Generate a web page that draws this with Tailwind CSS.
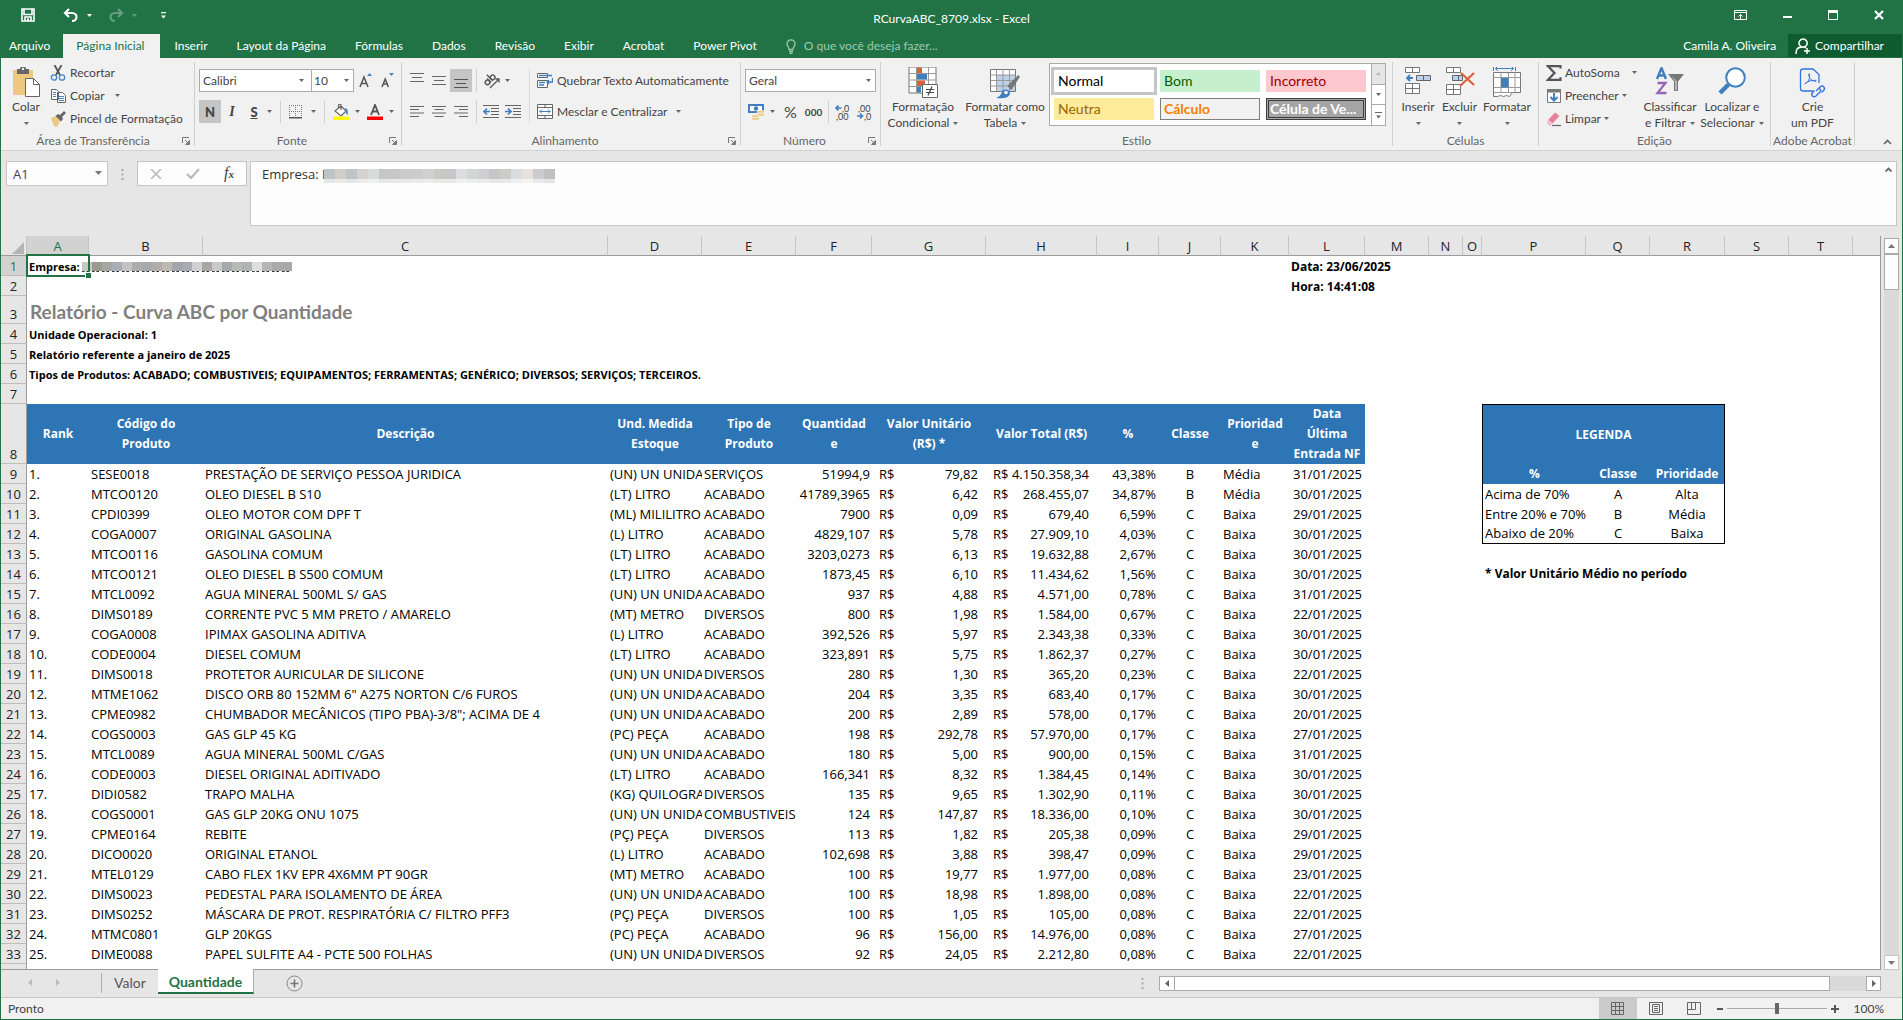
<!DOCTYPE html>
<html lang="pt-BR">
<head>
  <meta charset="UTF-8" />
  <meta name="viewport" content="width=device-width, initial-scale=1.0" />
  <title>RCurvaABC_8709.xlsx - Excel</title>
  <script src="https://cdn.jsdelivr.net/npm/@tailwindcss/browser@4"></script>
</head>
<body class="h-screen flex flex-col overflow-hidden bg-[#e6e6e6] border-x border-b border-[#217346] font-['Lato','Open_Sans',sans-serif] text-xs text-[#444]">

  <!-- Shared glyphs -->
  <svg class="hidden">
    <symbol id="caret" viewBox="0 0 5 3"><path d="M0 0h5L2.5 3z" fill="#666" /></symbol>
    <symbol id="launcher" viewBox="0 0 8 8"><path d="M.5 6V.5H7M3 3l3.5 3.5M7.5 3.5v4h-4z" fill="none" stroke="#777" /><path d="M7.5 4v3.5H4z" fill="#777" /></symbol>
  </svg>

  <!-- Title bar -->
  <header class="bg-[#217346] text-white shrink-0">
    <div class="h-[34px] flex items-center relative">
      <div class="flex items-center pl-5 pb-1">
        <button aria-label="Salvar"><svg class="w-[14px] h-[14px]" viewBox="0 0 14 14"><path d="M1 1h12v12H1zM3 1v5.500h8V1M4 13V9h6v4" fill="none" stroke="#fff" stroke-width="1.600" /><path d="M6 10.500h2V13H6z" fill="#fff" /></svg></button>
        <button aria-label="Desfazer" class="ml-7 flex items-center gap-2"><svg class="w-[16px] h-[14px]" viewBox="0 0 16 14"><path d="M6 1L2 5l4 4M2.500 5H9c6 0 6 8 0 8" fill="none" stroke="#fff" stroke-width="2.200" /></svg><svg class="w-[5px] h-[3px]" viewBox="0 0 5 3"><path d="M0 0h5L2.500 3z" fill="#fff" /></svg></button>
        <button aria-label="Refazer" class="ml-4 flex items-center gap-2 opacity-30"><svg class="w-[16px] h-[14px]" viewBox="0 0 16 14"><path d="M10 1l4 4-4 4M13.500 5H7c-6 0-6 8 0 8" fill="none" stroke="#fff" stroke-width="2.200" /></svg><svg class="w-[5px] h-[3px]" viewBox="0 0 5 3"><path d="M0 0h5L2.500 3z" fill="#fff" /></svg></button>
        <button aria-label="Personalizar" class="ml-6"><svg class="w-[5px] h-[7px]" viewBox="0 0 5 7"><path d="M0 0h5v1.200H0zM0 3.500h5L2.500 6.500z" fill="#fff" /></svg></button>
      </div>
      <h1 class="absolute inset-x-0 top-[11px] text-center leading-4">RCurvaABC_8709.xlsx - Excel</h1>
      <div class="ml-auto flex items-center gap-[36px] pr-[18px] pb-1">
        <button aria-label="Opções da faixa"><svg class="w-[13px] h-[10px]" viewBox="0 0 13 10"><path d="M.5.5h12v9H.5zM.5 2.500h12M6.500 9V4.500M4.500 6.500l2-2 2 2" fill="none" stroke="#fff" /></svg></button>
        <button aria-label="Minimizar"><svg class="w-[9px] h-[10px]" viewBox="0 0 9 10"><path d="M0 6h9v2H0z" fill="#fff" /></svg></button>
        <button aria-label="Restaurar"><svg class="w-[10px] h-[10px]" viewBox="0 0 10 10"><path d="M.5.5h9v9h-9z" fill="none" stroke="#fff" /><path d="M0 0h10v3H0z" fill="#fff" /></svg></button>
        <button aria-label="Fechar"><svg class="w-[10px] h-[10px]" viewBox="0 0 10 10"><path d="M1 1l8 8M9 1L1 9" stroke="#fff" stroke-width="2.200" /></svg></button>
      </div>
    </div>

    <!-- Ribbon tabs -->
    <nav class="h-6 flex items-stretch leading-6">
      <a href="#" class="pl-2 pr-[13px]">Arquivo</a>
      <a href="#" class="pl-[13px] pr-4 bg-[#f1f1f1] text-[#217346]">Página Inicial</a>
      <a href="#" class="pl-[14px] pr-[15px]">Inserir</a>
      <a href="#" class="pl-[14px] pr-[15px]">Layout da Página</a>
      <a href="#" class="pl-[14px] pr-[15px]">Fórmulas</a>
      <a href="#" class="pl-[14px] pr-[15px]">Dados</a>
      <a href="#" class="pl-[14px] pr-[15px]">Revisão</a>
      <a href="#" class="pl-[14px] pr-[15px]">Exibir</a>
      <a href="#" class="pl-[14px] pr-[15px]">Acrobat</a>
      <a href="#" class="pl-[14px] pr-[15px]">Power Pivot</a>
      <label class="flex items-center gap-2 pl-[14px] text-[#a0c9b0]">
        <svg class="w-[10px] h-[15px]" viewBox="0 0 10 15"><path d="M3 10.500C3 8 1 7.500 1 4.800a4 4 0 0 1 8 0C9 7.500 7 8 7 10.500zM3 12.500h4M3.500 14.300h3" fill="none" stroke="#a0c9b0" stroke-width="1.300" /></svg>
        <input type="text" placeholder="O que você deseja fazer..." class="w-44 placeholder:text-[#a0c9b0] placeholder:opacity-100 outline-none" />
      </label>
      <a href="#" class="ml-auto px-3">Camila A. Oliveira</a>
      <button class="h-[23px] bg-[#0f5b2f] flex items-center gap-1 pl-[7px] pr-[18px] leading-[23px]">
        <svg class="w-[16px] h-[16px]" viewBox="0 0 16 16"><path d="M8 9C1 9 1.200 12.500 1 16M8 9.200A4.100 4.100 0 1 1 8.200 9.200M8 9c2 0 2.500.500 3 1M12 10v6M9 13h6" fill="none" stroke="#fff" stroke-width="1.500" /></svg>
        Compartilhar
      </button>
    </nav>
  </header>

  <!-- Ribbon -->
  <div class="h-[93px] shrink-0 flex bg-[#f1f1f1] border-b border-[#d2d2d2] whitespace-nowrap leading-4">

    <section class="w-[194px] my-1 border-r border-[#d0d0d0] flex flex-col">
      <div class="flex-1 flex pl-[9px]">
        <button class="w-[32px] h-[70px] flex flex-col items-center pt-[5px]">
          <svg class="w-[30px] h-[32px] shrink-0" viewBox="0 1 30 32"><path d="M2 4h20v25H2z" fill="#edc87e" /><path d="M6 3h3c0-4 6-4 6 0h3v5H6z" fill="#666" /><circle cx="12" cy="3" r="1.200" fill="#f1f1f1" /><path d="M14.500 12.500h8l6 6v12h-14z" fill="#fff" stroke="#666" /><path d="M22.500 12.500v6h6" fill="none" stroke="#666" /></svg>
          <span>Colar</span>
          <svg class="w-[5px] h-[3px] mt-[7px] shrink-0"><use href="#caret" /></svg>
        </button>
        <div class="flex flex-col pl-2 -mt-px">
          <button class="h-[23px] flex items-center gap-1"><svg class="w-4 h-4" viewBox="0 0 16 16"><path d="M4.500 0l5.500 10M11.500 0L6 10" stroke="#555" stroke-width="1.800" fill="none" /><circle cx="4" cy="12.500" r="2.700" fill="none" stroke="#4a86c0" stroke-width="1.300" /><circle cx="12" cy="12.500" r="2.700" fill="none" stroke="#4a86c0" stroke-width="1.300" /></svg>Recortar</button>
          <button class="h-[23px] flex items-center gap-1"><svg class="w-4 h-4" viewBox="0 0 16 16"><path d="M1.500 1.500h5l2 2v8h-7zM7.500 4.500h5l3 3v7h-8z" fill="#fff" stroke="#666" /><path d="M3 4.500h3M3 6.500h3M3 8.500h3M9 8.500h5M9 10.500h5M9 12.500h5" stroke="#4a86c0" /></svg>Copiar<svg class="w-[5px] h-[3px] ml-[6px]"><use href="#caret" /></svg></button>
          <button class="h-[23px] flex items-center gap-1"><svg class="w-4 h-4" viewBox="0 0 16 16"><path d="M1 7l5-2 4 5-3 6-3-1z" fill="#edc87e" /><path d="M5.500 5L8 3l2 1 4-4 2 2-4 4 1 2-2 2.500z" fill="#666" /></svg>Pincel de Formatação</button>
        </div>
      </div>
      <div class="flex items-center pr-1 leading-[10px] text-[#666]"><span class="flex-1 text-center pl-[3px]">Área de Transferência</span><button aria-label="Mais opções da área de transferência"><svg class="w-2 h-2"><use href="#launcher" /></svg></button></div>
    </section>

    <section class="w-[207px] my-1 border-r border-[#d0d0d0] flex flex-col">
      <div class="flex-1 flex flex-col gap-2 pt-[7px] pl-1">
        <div class="h-[23px] flex items-center">
          <div class="relative">
            <select aria-label="Fonte" class="appearance-none w-[113px] h-[23px] pl-[3px] bg-white border border-[#ababab]"><option>Calibri</option></select>
            <svg class="absolute right-2 top-[10px] w-[5px] h-[3px]"><use href="#caret" /></svg>
          </div>
          <div class="relative -ml-px">
            <select aria-label="Tamanho da fonte" class="appearance-none w-[43px] h-[23px] pl-[2px] bg-white border border-[#ababab]"><option>10</option></select>
            <svg class="absolute right-[5px] top-[10px] w-[5px] h-[3px]"><use href="#caret" /></svg>
          </div>
          <button aria-label="Aumentar fonte" class="ml-[5px]"><svg class="w-[14px] h-[15px]" viewBox="0 0 14 15"><path d="M1 14L5 4l4 10M2.500 10.500h5" fill="none" stroke="#555" stroke-width="1.500" /><path d="M8 3h5l-2.500-3z" fill="#4a86c0" /></svg></button>
          <button aria-label="Diminuir fonte" class="ml-2"><svg class="w-[14px] h-[15px]" viewBox="0 0 14 15"><path d="M1 14l3.200-8 3.200 8M2.200 11h4" fill="none" stroke="#555" stroke-width="1.500" /><path d="M8 0h5l-2.500 3z" fill="#4a86c0" /></svg></button>
        </div>
        <div class="h-[23px] flex items-center">
          <button class="w-[22px] h-[23px] bg-[#c5c5c5] font-black text-[13px]">N</button>
          <button class="w-[22px] italic font-bold font-['Liberation_Serif',serif] text-sm">I</button>
          <button class="w-[22px] underline font-black text-[13px]">S</button>
          <svg class="w-[5px] h-[3px] ml-[2px]"><use href="#caret" /></svg>
          <span class="w-px h-[22px] bg-[#d0d0d0] mx-2"></span>
          <button class="flex items-center gap-2" aria-label="Bordas"><svg class="w-[14px] h-[14px]" viewBox="0 0 14 14"><path d="M.5 0v12M6.500 0v12M12.500 0v12M0 .5h13M0 6.500h13" fill="none" stroke="#777" stroke-dasharray="1 1" /><path d="M0 12h13v1.500H0z" fill="#555" /></svg><svg class="w-[5px] h-[3px]"><use href="#caret" /></svg></button>
          <span class="w-px h-[22px] bg-[#d0d0d0] mx-2"></span>
          <button class="flex items-center gap-[6px]" aria-label="Cor de preenchimento"><svg class="w-4 h-4" viewBox="0 0 16 16"><path d="M2 7l6-5 5 5-5 5zM5.500 5V1.500C5.500 0 8 0 8 1.500V6" fill="#fff" stroke="#666" stroke-width="1.200" /><path d="M12 4c3 1 3.500 4 2.500 7-2-1-1.500-3-2.500-4z" fill="#4a86c0" /><path d="M0 12.500h16V16H0z" fill="#ff0" /></svg><svg class="w-[5px] h-[3px]"><use href="#caret" /></svg></button>
          <button class="ml-[7px] flex items-center gap-[6px]" aria-label="Cor da fonte"><svg class="w-4 h-4" viewBox="0 0 16 16"><path d="M4 11L8 1l4 10M5.500 7.500h5" fill="none" stroke="#555" stroke-width="1.800" /><path d="M0 12.500h16V16H0z" fill="red" /></svg><svg class="w-[5px] h-[3px]"><use href="#caret" /></svg></button>
        </div>
      </div>
      <div class="flex items-center pr-1 leading-[10px] text-[#666]"><span class="flex-1 text-center">Fonte</span><button aria-label="Mais opções de fonte"><svg class="w-2 h-2"><use href="#launcher" /></svg></button></div>
    </section>

    <section class="w-[339px] my-1 border-r border-[#d0d0d0] flex flex-col">
      <div class="flex-1 flex pt-[7px] pl-1">
        <div class="w-[70px] flex flex-col gap-2">
          <div class="flex">
            <button aria-label="Alinhar em cima" class="w-[22px] h-[23px] flex justify-center items-center"><svg class="w-[14px] h-[15px]" viewBox="0 0 14 15"><path d="M0 .5h14M2 4.500h10M0 8.500h14" stroke="#666" /></svg></button>
            <button aria-label="Alinhar no meio" class="w-[22px] h-[23px] flex justify-center items-center"><svg class="w-[14px] h-[15px]" viewBox="0 0 14 15"><path d="M0 3.500h14M2 7.500h10M0 11.500h14" stroke="#666" /></svg></button>
            <button aria-label="Alinhar embaixo" class="w-[22px] h-[23px] flex justify-center items-center bg-[#c5c5c5]"><svg class="w-[14px] h-[15px]" viewBox="0 0 14 15"><path d="M0 6.500h14M2 10.500h10M0 14.500h14" stroke="#555" /></svg></button>
          </div>
          <div class="flex">
            <button aria-label="Alinhar à esquerda" class="w-[22px] h-[23px] flex justify-center items-center"><svg class="w-[14px] h-[11px]" viewBox="0 0 14 11"><path d="M0 .5h14M0 3.500h9M0 7h14M0 10.500h9" stroke="#666" /></svg></button>
            <button aria-label="Centralizar" class="w-[22px] h-[23px] flex justify-center items-center"><svg class="w-[14px] h-[11px]" viewBox="0 0 14 11"><path d="M0 .5h14M2.500 3.500h9M0 7h14M2.500 10.500h9" stroke="#666" /></svg></button>
            <button aria-label="Alinhar à direita" class="w-[22px] h-[23px] flex justify-center items-center"><svg class="w-[14px] h-[11px]" viewBox="0 0 14 11"><path d="M0 .5h14M5 3.500h9M0 7h14M5 10.500h9" stroke="#666" /></svg></button>
          </div>
        </div>
        <div class="w-[54px] h-[54px] flex flex-col gap-2 border-r border-[#d8d8d8]">
          <button aria-label="Orientação" class="h-[23px] pl-[7px] flex items-center gap-1 border-l border-[#d0d0d0]">
            <svg class="w-[17px] h-[15px] overflow-visible" viewBox="0 0 17 15"><g transform="rotate(-45 6 7)" fill="none" stroke="#555" stroke-width="1.400"><circle cx="2.500" cy="7" r="2.300" /><path d="M5 4v5.500M7.500 1v8.500" /><circle cx="9.800" cy="7" r="2.300" /></g><path d="M6 15L15 6M11.500 6H15v3.500" fill="none" stroke="#555" stroke-width="1.300" /></svg>
            <svg class="w-[5px] h-[3px]"><use href="#caret" /></svg>
          </button>
          <div class="h-[23px] pl-[6px] flex items-center gap-[6px] border-l border-[#d0d0d0]">
            <button aria-label="Diminuir recuo"><svg class="w-4 h-[13px] block" viewBox="0 0 16 13"><path d="M0 .5h16M8 3.500h8M8 6.500h8M8 9.500h8M0 12.500h16" stroke="#666" /><path d="M7 6.500H1M4 3.500l-3 3 3 3" fill="none" stroke="#3f7fbf" stroke-width="1.700" /></svg></button>
            <button aria-label="Aumentar recuo"><svg class="w-4 h-[13px] block" viewBox="0 0 16 13"><path d="M0 .5h16M8 3.500h8M8 6.500h8M8 9.500h8M0 12.500h16" stroke="#666" /><path d="M0 6.500h6M3 3.500l3 3-3 3" fill="none" stroke="#3f7fbf" stroke-width="1.700" /></svg></button>
          </div>
        </div>
        <div class="flex flex-col gap-2 pl-[7px]">
          <button class="h-[23px] flex items-center gap-1"><svg class="w-4 h-4" viewBox="0 0 16 16"><path d="M.5.5h10v4H.5zM.5 7.500h10v7H.5z" fill="#fff" stroke="#666" /><path d="M2 2.500h13M2 9.500h6M2 12h5M15.500 5v4h-5M12 7l-2 2 2 2" fill="none" stroke="#3f7fbf" stroke-width="1.300" /></svg>Quebrar Texto Automaticamente</button>
          <button class="h-[23px] flex items-center gap-1"><svg class="w-4 h-4" viewBox="0 0 16 16"><path d="M.5.5h15v14H.5zM.5 3.500h15M.5 11.500h15M8 .5v3M8 11.500v3" fill="#fff" stroke="#666" /><path d="M2.500 7.500h11M5 5.500l-2 2 2 2M11 5.500l2 2-2 2" fill="none" stroke="#3f7fbf" /></svg>Mesclar e Centralizar<svg class="w-[5px] h-[3px] ml-[5px]"><use href="#caret" /></svg></button>
        </div>
      </div>
      <div class="flex items-center pr-1 leading-[10px] text-[#666]"><span class="flex-1 text-center">Alinhamento</span><button aria-label="Mais opções de alinhamento"><svg class="w-2 h-2"><use href="#launcher" /></svg></button></div>
    </section>

    <section class="w-[140px] my-1 border-r border-[#d0d0d0] flex flex-col">
      <div class="flex-1 flex flex-col gap-2 pt-[7px] pl-1">
        <div class="relative w-[131px]">
          <select aria-label="Formato de número" class="block appearance-none w-full h-[23px] pl-[3px] bg-white border border-[#ababab]"><option>Geral</option></select>
          <svg class="absolute right-[5px] top-[10px] w-[5px] h-[3px]"><use href="#caret" /></svg>
        </div>
        <div class="h-[23px] flex items-center pl-[3px]">
          <button aria-label="Formato de contabilização" class="flex items-center gap-[6px]"><svg class="w-4 h-4" viewBox="0 0 16 16"><path d="M0 0h16v9H0z" fill="#3f7fbf" /><path d="M2 2h12v5H2z" fill="#fff" /><circle cx="8" cy="4.500" r="2.200" fill="#3f7fbf" /><path d="M9 6.500h7v2.500H9zM9 9.500h7V12H9zM4 11h7v2.300H4zM4 13.700h7V16H4z" fill="#edc87e" stroke="#f1f1f1" stroke-width=".5" /></svg><svg class="w-[5px] h-[3px]"><use href="#caret" /></svg></button>
          <button class="ml-[9px] text-base">%</button>
          <button class="ml-2 text-[10px] font-bold">000</button>
          <span class="w-px h-[22px] bg-[#d0d0d0] mx-[6px]"></span>
          <button aria-label="Aumentar casas decimais"><svg class="w-4 h-4 overflow-visible" viewBox="0 0 16 16"><path d="M6.500 4H1M3.500 1.500L1 4l2.500 2.500" fill="none" stroke="#3f7fbf" stroke-width="1.700" /><text x="7" y="8" font-size="9" fill="#444">,0</text><text x="1" y="16" font-size="9" fill="#444">,00</text></svg></button>
          <button aria-label="Diminuir casas decimais" class="ml-[6px]"><svg class="w-4 h-4 overflow-visible" viewBox="0 0 16 16"><path d="M0 12h5.500M3 9.500L5.500 12 3 14.500" fill="none" stroke="#3f7fbf" stroke-width="1.700" /><text x="1" y="8" font-size="9" fill="#444">,00</text><text x="7" y="16" font-size="9" fill="#444">,0</text></svg></button>
        </div>
      </div>
      <div class="flex items-center pr-1 leading-[10px] text-[#666]"><span class="flex-1 text-center">Número</span><button aria-label="Mais opções de número"><svg class="w-2 h-2"><use href="#launcher" /></svg></button></div>
    </section>

    <section class="w-[512px] my-1 border-r border-[#d0d0d0] flex flex-col">
      <div class="flex-1 flex pl-1">
        <button class="w-[76px] flex flex-col items-center pt-[5px]">
          <svg class="w-[30px] h-[32px] shrink-0" viewBox="0 1 30 32"><path d="M1 1h27v26H1z" fill="#fff" stroke="#777" /><path d="M1 7.500h27M1 14h27M1 20.500h27M8.500 1v26M20.500 1v26" stroke="#999" /><path d="M9 1.500h5v5.500H9zM9 14.500h8v5.500H9z" fill="#d9603b" /><path d="M9 8h10v5.500H9zM9 21h4v5.500H9z" fill="#3f7fbf" /><path d="M14.500 18.500h15v13h-15z" fill="#fff" stroke="#666" /><path d="M18 23.500h8M18 26.500h8M24 20.500l-4 9" stroke="#444" stroke-width="1.200" /></svg>
          <span>Formatação</span>
          <span class="flex items-center gap-1">Condicional<svg class="w-[5px] h-[3px]"><use href="#caret" /></svg></span>
        </button>
        <button class="w-[88px] flex flex-col items-center pt-[5px]">
          <svg class="w-[30px] h-[32px] shrink-0" viewBox="0 1 30 32"><path d="M.5 3.500h25v22H.5z" fill="#fff" stroke="#777" /><path d="M7 9h18v16H7z" fill="#bcd0ea" /><path d="M.5 9h25M.5 14.500h25M.5 20h25M6.500 3.500v22M13 3.500v22M19.500 3.500v22" stroke="#999" /><path d="M29 10l-8 12-2-2z" stroke="#777" stroke-width="2.500" fill="#777" /><path d="M6 32c3-1 5-3 6-6 1-4 8-3 8 1 0 5-8 6-14 5z" fill="#3f7fbf" /><circle cx="16" cy="26.500" r="1.800" fill="#fff" /></svg>
          <span>Formatar como</span>
          <span class="flex items-center gap-1">Tabela<svg class="w-[5px] h-[3px]"><use href="#caret" /></svg></span>
        </button>
        <div class="mt-px h-[63px] flex border border-[#ababab] bg-white">
          <div class="grid grid-cols-3 content-center gap-[6px] pl-1 pr-[5px] text-sm leading-5 text-left">
            <button class="w-[100px] h-[22px] pl-1 text-left text-black outline-3 outline-[#c5c5c5]">Normal</button>
            <button class="w-[100px] h-[22px] pl-1 text-left bg-[#c6efce] text-[#006100]">Bom</button>
            <button class="w-[100px] h-[22px] pl-1 text-left bg-[#ffc7ce] text-[#9c0006]">Incorreto</button>
            <button class="w-[100px] h-[22px] pl-1 text-left bg-[#ffeb9c] text-[#9c6500]">Neutra</button>
            <button class="w-[100px] h-[22px] pl-[3px] text-left bg-[#f2f2f2] border border-[#7f7f7f] text-[#fa7d00] font-bold">Cálculo</button>
            <button class="w-[100px] h-[22px] pl-px text-left bg-[#a5a5a5] border-3 border-double border-[#3f3f3f] text-white font-bold leading-4">Célula de Ve...</button>
          </div>
          <div class="w-[14px] flex flex-col border-l border-[#ababab] divide-y divide-[#ababab]">
            <button aria-label="Estilos anteriores" class="flex-1 flex items-center justify-center bg-[#e6e6e6]"><svg class="w-[5px] h-[3px]" viewBox="0 0 5 3"><path d="M0 3h5L2.500 0z" fill="#b5b5b5" /></svg></button>
            <button aria-label="Próximos estilos" class="flex-1 flex items-center justify-center"><svg class="w-[5px] h-[3px]"><use href="#caret" /></svg></button>
            <button aria-label="Todos os estilos" class="flex-1 flex items-center justify-center"><svg class="w-[7px] h-[7px]" viewBox="0 0 7 7"><path d="M0 0h7v1H0zM1 3.500h5L3.500 6.500z" fill="#666" /></svg></button>
          </div>
        </div>
      </div>
      <div class="text-center leading-[10px] text-[#666]">Estilo</div>
    </section>

    <section class="w-[146px] my-1 border-r border-[#d0d0d0] flex flex-col">
      <div class="flex-1 flex pl-1">
        <button class="w-[42px] h-[70px] flex flex-col items-center pt-[5px]">
          <svg class="w-[28px] h-[32px] shrink-0" viewBox="0 1 28 32"><path d="M1.500 1.500h14v5h-14zM8.500 1.500v5M1.500 17.500h14v10h-14zM8.500 17.500v10M1.500 22.500h14" fill="#fff" stroke="#777" /><path d="M12.500 9.500h14v5h-14zM19.500 9.500v5" fill="#bcd0ea" stroke="#666" /><path d="M9 12H3M6 9l-3 3 3 3" fill="none" stroke="#3f7fbf" stroke-width="1.800" /></svg>
          <span>Inserir</span><svg class="w-[5px] h-[3px] mt-[7px] shrink-0"><use href="#caret" /></svg>
        </button>
        <button class="w-[41px] h-[70px] flex flex-col items-center pt-[5px]">
          <svg class="w-[30px] h-[32px] shrink-0" viewBox="0 1 30 32"><path d="M1.500 1.500h14v5h-14zM8.500 1.500v5M1.500 18.500h14v10h-14zM8.500 18.500v10M1.500 23.500h14" fill="#fff" stroke="#777" /><path d="M7.500 9.500h10v5h-10zM13.500 9.500v5" fill="#bcd0ea" stroke="#666" /><path d="M16 7l13 12M29 7L15 20" fill="none" stroke="#d9603b" stroke-width="2.200" /></svg>
          <span>Excluir</span><svg class="w-[5px] h-[3px] mt-[7px] shrink-0"><use href="#caret" /></svg>
        </button>
        <button class="w-[54px] h-[70px] flex flex-col items-center pt-[5px]">
          <svg class="w-[30px] h-[32px] shrink-0" viewBox="0 1 30 32"><path d="M1.500 1v4M23.500 1v4M3 2.500h19M6 0L3.500 2.500 6 5M19 0l2.500 2.500L19 5" fill="none" stroke="#3f7fbf" /><path d="M1.500 6.500h27v20h-8l-3 4-3-1-3 1-3-1-3 1h-4z" fill="#fff" stroke="#777" /><path d="M1.500 11.500h27M1.500 21.500h27M1.500 26.500h20M9 6.500v20M16.500 6.500v20M23 6.500v20" stroke="#999" /><path d="M9 12h7.500v9.500H9z" fill="#3f7fbf" /></svg>
          <span>Formatar</span><svg class="w-[5px] h-[3px] mt-[7px] shrink-0"><use href="#caret" /></svg>
        </button>
      </div>
      <div class="text-center leading-[10px] text-[#666]">Células</div>
    </section>

    <section class="w-[232px] my-1 border-r border-[#d0d0d0] flex flex-col">
      <div class="flex-1 flex pl-[7px]">
        <div class="w-[94px] flex flex-col -mt-px">
          <button class="h-[23px] flex items-center gap-[3px]"><svg class="w-4 h-4" viewBox="0 0 16 16"><path d="M14.500 3.500V1.200H2L8.500 8 2 14.800h12.500v-2.500" fill="none" stroke="#555" stroke-width="2.200" /></svg>AutoSoma<svg class="w-[5px] h-[3px] ml-[9px]"><use href="#caret" /></svg></button>
          <button class="h-[23px] flex items-center gap-[3px]"><svg class="w-4 h-4" viewBox="0 0 16 16"><path d="M1.500 1.500h13v13h-13z" fill="#fff" stroke="#777" /><path d="M1 1h14v3.500H1z" fill="#777" /><path d="M8 5v7M4.500 9L8 12.500 11.500 9" fill="none" stroke="#3f7fbf" stroke-width="2" /></svg>Preencher<svg class="w-[5px] h-[3px]"><use href="#caret" /></svg></button>
          <button class="h-[23px] flex items-center gap-[3px]"><svg class="w-4 h-4" viewBox="0 0 16 16"><path d="M2 9l7-7.500 4.500 3.500-7 7.500z" fill="#e8819a" /><path d="M1.500 9.500l4.500 3.500-1 1.500H3L1 12z" fill="#f2b8c6" /><path d="M6 14.500h9" stroke="#666" stroke-width="1.200" /></svg>Limpar<svg class="w-[5px] h-[3px]"><use href="#caret" /></svg></button>
        </div>
        <button class="w-[60px] flex flex-col items-center pt-[5px]">
          <svg class="w-[30px] h-[32px] shrink-0" viewBox="0 1 30 32"><path d="M2 13L6.500 2 11 13M3.500 9.500h6" fill="none" stroke="#3f7fbf" stroke-width="2.400" /><path d="M2.500 17h8L2.500 27h9" fill="none" stroke="#9466b8" stroke-width="2.300" /><path d="M13 8h16l-6 7.500V25h-4v-9.500z" fill="#777" /><path d="M20.500 15.500v9h1v-9l-5-6" fill="#f1f1f1" /></svg>
          <span>Classificar</span>
          <span class="flex items-center gap-1">e Filtrar<svg class="w-[5px] h-[3px]"><use href="#caret" /></svg></span>
        </button>
        <button class="w-[64px] flex flex-col items-center pt-[5px]">
          <svg class="w-[30px] h-[32px] shrink-0" viewBox="0 1 30 32"><circle cx="18.500" cy="11.500" r="9.300" fill="#fff" stroke="#3f7fbf" stroke-width="2" /><path d="M11.500 18.500L3 27" stroke="#3f7fbf" stroke-width="4.500" /></svg>
          <span>Localizar e</span>
          <span class="flex items-center gap-1">Selecionar<svg class="w-[5px] h-[3px]"><use href="#caret" /></svg></span>
        </button>
      </div>
      <div class="text-center leading-[10px] text-[#666]">Edição</div>
    </section>

    <section class="w-[84px] my-1 border-r border-[#d0d0d0] flex flex-col">
      <button class="flex-1 flex flex-col items-center pt-[5px]">
        <svg class="w-[30px] h-[32px] shrink-0" viewBox="0 1 30 32"><path d="M15 25H5c-2 0-2.500-1-2.500-2.500v-17C2.500 4 3 3 5 3h10l6 5.500V17" fill="none" stroke="#3573e0" stroke-width="1.300" /><path d="M6.500 18c4-1.500 5.500-6 5.200-9.500 0-1.500-1.200-1-1 .5.500 3.500 3 6 6.500 6.300 1.500.2 1.500-1 0-1-4 0-7 1-10 3" fill="none" stroke="#3573e0" /><path d="M18 25l4-4c3-2.500 6 1 3.500 3.500l-2 2M21 22.500c2 .5 2 2 1 3.500l-4 4c-3 2-5.500-1-3.500-3.500l2-2" fill="none" stroke="#3573e0" stroke-width="1.400" /></svg>
        <span>Crie</span><span>um PDF</span>
      </button>
      <div class="text-center leading-[10px] text-[#666]">Adobe Acrobat</div>
    </section>
    <button aria-label="Recolher a faixa" class="ml-auto self-end mb-px mr-[10px]"><svg class="w-[9px] h-[6px] mb-1" viewBox="0 0 9 6"><path d="M1 5l3.500-3.500L8 5" fill="none" stroke="#666" stroke-width="1.700" /></svg></button>
  </div>

  <!-- Name box and formula bar -->
  <div class="shrink-0 flex items-start pt-[10px] pb-[10px] pl-[5px] pr-[5px] font-['Open_Sans',sans-serif]">
    <div class="relative">
      <input aria-label="Caixa de nome" value="A1" class="block w-[102px] h-[25px] pl-[6px] text-[13px] bg-[#fdfdfd] border border-[#c6c6c6]" />
      <svg class="absolute right-[6px] top-[10px] w-[7px] h-[4px]" viewBox="0 0 7 4"><path d="M0 0h7L3.500 4z" fill="#777" /></svg>
    </div>
    <svg class="w-[3px] h-[11px] mx-[13px] mt-2" viewBox="0 0 3 11"><path d="M.5 0h2v2h-2zM.5 4.500h2v2h-2zM.5 9h2v2h-2z" fill="#aaa" /></svg>
    <div class="w-[110px] h-[25px] flex items-center justify-between px-3 bg-[#fdfdfd] border border-[#c6c6c6]">
      <button aria-label="Cancelar"><svg class="w-[12px] h-[10px]" viewBox="0 0 12 10"><path d="M1 0l10 10M11 0L1 10" stroke="#bbb" stroke-width="1.700" /></svg></button>
      <button aria-label="Inserir"><svg class="w-[14px] h-[11px]" viewBox="0 0 14 11"><path d="M1 6l4 4L13 1" fill="none" stroke="#bbb" stroke-width="2.200" /></svg></button>
      <button class="italic font-['Liberation_Serif',serif] text-base text-[#444] leading-4">f<span class="text-[11px] font-bold">x</span></button>
    </div>
    <div class="ml-[3px] flex-1 h-[65px] flex items-start bg-[#fdfdfd] border border-[#c6c6c6]">
      <div class="flex-1 flex items-start pl-[11px] pt-[3px] text-[13px] leading-[18px] text-[#333]">Empresa:&nbsp;<span class="w-[2px] overflow-hidden">F</span><div id="formulaMask" class="flex mt-1"></div></div>
      <button aria-label="Recolher barra de fórmulas" class="p-1 mt-px"><svg class="w-[7px] h-[5px]" viewBox="0 0 7 5"><path d="M.5 4.500l3-3 3 3" fill="none" stroke="#666" stroke-width="1.800" /></svg></button>
    </div>
  </div>

  <!-- Worksheet -->
  <main class="flex-1 min-h-0 flex">
    <div class="flex-1 overflow-hidden bg-white border-r border-b border-[#9b9b9b]">
      <table class="w-full table-fixed border-separate border-spacing-0 whitespace-nowrap font-['Open_Sans',sans-serif] text-[13px] leading-5 text-black">
        <colgroup>
          <col class="w-[26px]" /><col class="w-[62px]" /><col class="w-[114px]" /><col class="w-[405px]" />
          <col class="w-[94px]" /><col class="w-[94px]" /><col class="w-[76px]" /><col class="w-[114px]" />
          <col class="w-[111px]" /><col class="w-[62px]" /><col class="w-[62px]" /><col class="w-[68px]" />
          <col class="w-[76px]" /><col class="w-[64px]" /><col class="w-[34px]" /><col class="w-[19px]" />
          <col class="w-[104px]" /><col class="w-[64px]" /><col class="w-[75px]" /><col class="w-[64px]" />
          <col class="w-[64px]" /><col />
        </colgroup>
        <thead>
          <tr id="letters"></tr>
        </thead>
        <tbody id="rows"></tbody>
      </table>
    </div>
    <div class="w-[21px] pl-[3px] pr-[3px] pt-[2px] flex flex-col">
      <button aria-label="Rolar para cima" class="h-4 bg-white border border-[#ababab] flex items-center justify-center shrink-0"><svg class="w-[7px] h-[4px]" viewBox="0 0 7 4"><path d="M0 4h7L3.500 0z" fill="#777" /></svg></button>
      <div class="flex-1 bg-[#dadada]"><div class="h-[36px] bg-white border border-[#ababab]"></div></div>
      <button aria-label="Rolar para baixo" class="h-[15px] bg-white border border-[#c6c6c6] flex items-center justify-center shrink-0"><svg class="w-[7px] h-[4px]" viewBox="0 0 7 4"><path d="M0 0h7L3.500 4z" fill="#777" /></svg></button>
    </div>
  </main>

  <!-- Sheet tabs -->
  <div class="h-[27px] shrink-0 flex items-start text-sm">
    <div class="w-[100px] h-[24px] flex items-center justify-center gap-6 pr-[14px]">
      <svg class="w-[4px] h-[7px]" viewBox="0 0 4 7"><path d="M4 0v7L0 3.500z" fill="#bbb" /></svg>
      <svg class="w-[4px] h-[7px]" viewBox="0 0 4 7"><path d="M0 0v7l4-3.500z" fill="#bbb" /></svg>
    </div>
    <a href="#" class="h-5 mt-[3px] border-l border-[#ababab] px-3 leading-5 text-[#555]">Valor</a>
    <a href="#" class="h-[25px] -mt-px px-[11px] leading-[26px] bg-white border-r border-[#ababab] border-b-2 border-b-[#217346] font-bold text-[#217346]">Quantidade</a>
    <button aria-label="Nova planilha" class="ml-8 mt-[5px]"><svg class="w-[17px] h-[17px]" viewBox="0 0 17 17"><circle cx="8.500" cy="8.500" r="7.500" fill="none" stroke="#888" /><path d="M8.500 4.500v8M4.500 8.500h8" stroke="#777" stroke-width="1.600" /></svg></button>
    <svg class="ml-auto mr-[15px] mt-2 w-[3px] h-[11px]" viewBox="0 0 3 11"><path d="M.5 0h2v2h-2zM.5 4.500h2v2h-2zM.5 9h2v2h-2z" fill="#aaa" /></svg>
    <div class="w-[38%] mt-[6px] mr-[21px] h-[15px] flex bg-[#dadada]">
      <button aria-label="Rolar para a esquerda" class="w-4 bg-white border border-[#ababab] flex items-center justify-center"><svg class="w-[4px] h-[7px]" viewBox="0 0 4 7"><path d="M4 0v7L0 3.500z" fill="#666" /></svg></button>
      <div class="flex-1 -ml-px mr-9 bg-white border border-[#ababab]"></div>
      <button aria-label="Rolar para a direita" class="w-[15px] bg-white border border-[#ababab] flex items-center justify-center"><svg class="w-[4px] h-[7px]" viewBox="0 0 4 7"><path d="M0 0v7l4-3.500z" fill="#666" /></svg></button>
    </div>
  </div>

  <!-- Status bar -->
  <footer class="h-[22px] shrink-0 flex items-center bg-[#f1f1f1] border-t border-[#c6c6c6] pl-[7px] pr-[18px]">
    <span class="flex-1">Pronto</span>
    <button aria-label="Normal" class="w-[38px] h-full flex items-center justify-center bg-[#cacaca]"><svg class="w-[13px] h-[13px]" viewBox="0 0 13 13"><path d="M.5.5h12v12H.5zM4.500 0v13M8.500 0v13M0 4.500h13M0 8.500h13" fill="none" stroke="#666" /></svg></button>
    <button aria-label="Layout da página" class="w-[38px] flex justify-center"><svg class="w-[14px] h-[13px]" viewBox="0 0 14 13"><path d="M.5.5h13v12H.5zM3.500 2.500h7v8h-7zM5 4.500h4M5 6.500h4M5 8.500h4" fill="none" stroke="#666" /></svg></button>
    <button aria-label="Quebra de página" class="w-[38px] flex justify-center"><svg class="w-[14px] h-[13px]" viewBox="0 0 14 13"><path d="M.5.5h13v12H.5zM4.500 0v7.500M.5 7.500h8V0" fill="none" stroke="#666" /></svg></button>
    <button aria-label="Reduzir" class="ml-1"><svg class="w-[6px] h-[2px]" viewBox="0 0 6 2"><path d="M0 0h6v2H0z" fill="#555" /></svg></button>
    <input type="range" aria-label="Zoom" value="50" class="appearance-none mx-1 w-[100px] h-px bg-[#aaa] [&::-webkit-slider-thumb]:appearance-none [&::-webkit-slider-thumb]:w-1 [&::-webkit-slider-thumb]:h-[11px] [&::-webkit-slider-thumb]:bg-[#666]" />
    <button aria-label="Ampliar"><svg class="w-2 h-2" viewBox="0 0 8 8"><path d="M0 3h3V0h2v3h3v2H5v3H3V5H0z" fill="#555" /></svg></button>
    <span class="ml-[15px]">100%</span>
  </footer>

  <script>
    const produtos = [
      "SESE0018|PRESTAÇÃO DE SERVIÇO PESSOA JURIDICA|(UN) UN UNIDADE|SERVIÇOS|51994,9|79,82|4.150.358,34|43,38%|B|Média|31/01/2025",
      "MTCO0120|OLEO DIESEL B S10|(LT) LITRO|ACABADO|41789,3965|6,42|268.455,07|34,87%|B|Média|30/01/2025",
      "CPDI0399|OLEO MOTOR COM DPF T|(ML) MILILITRO|ACABADO|7900|0,09|679,40|6,59%|C|Baixa|29/01/2025",
      "COGA0007|ORIGINAL GASOLINA|(L) LITRO|ACABADO|4829,107|5,78|27.909,10|4,03%|C|Baixa|30/01/2025",
      "MTCO0116|GASOLINA COMUM|(LT) LITRO|ACABADO|3203,0273|6,13|19.632,88|2,67%|C|Baixa|30/01/2025",
      "MTCO0121|OLEO DIESEL B S500 COMUM|(LT) LITRO|ACABADO|1873,45|6,10|11.434,62|1,56%|C|Baixa|30/01/2025",
      "MTCL0092|AGUA MINERAL 500ML S/ GAS|(UN) UN UNIDADE|ACABADO|937|4,88|4.571,00|0,78%|C|Baixa|31/01/2025",
      "DIMS0189|CORRENTE PVC 5 MM PRETO / AMARELO|(MT) METRO|DIVERSOS|800|1,98|1.584,00|0,67%|C|Baixa|22/01/2025",
      "COGA0008|IPIMAX GASOLINA ADITIVA|(L) LITRO|ACABADO|392,526|5,97|2.343,38|0,33%|C|Baixa|30/01/2025",
      "CODE0004|DIESEL COMUM|(LT) LITRO|ACABADO|323,891|5,75|1.862,37|0,27%|C|Baixa|30/01/2025",
      "DIMS0018|PROTETOR AURICULAR DE SILICONE|(UN) UN UNIDADE|DIVERSOS|280|1,30|365,20|0,23%|C|Baixa|22/01/2025",
      "MTME1062|DISCO ORB 80 152MM 6\" A275 NORTON C/6 FUROS|(UN) UN UNIDADE|ACABADO|204|3,35|683,40|0,17%|C|Baixa|30/01/2025",
      "CPME0982|CHUMBADOR MECÂNICOS (TIPO PBA)-3/8\"; ACIMA DE 4|(UN) UN UNIDADE|ACABADO|200|2,89|578,00|0,17%|C|Baixa|20/01/2025",
      "COGS0003|GAS GLP 45 KG|(PC) PEÇA|ACABADO|198|292,78|57.970,00|0,17%|C|Baixa|27/01/2025",
      "MTCL0089|AGUA MINERAL 500ML C/GAS|(UN) UN UNIDADE|ACABADO|180|5,00|900,00|0,15%|C|Baixa|31/01/2025",
      "CODE0003|DIESEL ORIGINAL ADITIVADO|(LT) LITRO|ACABADO|166,341|8,32|1.384,45|0,14%|C|Baixa|30/01/2025",
      "DIDI0582|TRAPO MALHA|(KG) QUILOGRAMA|DIVERSOS|135|9,65|1.302,90|0,11%|C|Baixa|30/01/2025",
      "COGS0001|GAS GLP 20KG ONU 1075|(UN) UN UNIDADE|COMBUSTIVEIS|124|147,87|18.336,00|0,10%|C|Baixa|30/01/2025",
      "CPME0164|REBITE|(PÇ) PEÇA|DIVERSOS|113|1,82|205,38|0,09%|C|Baixa|29/01/2025",
      "DICO0020|ORIGINAL ETANOL|(L) LITRO|ACABADO|102,698|3,88|398,47|0,09%|C|Baixa|29/01/2025",
      "MTEL0129|CABO FLEX 1KV EPR 4X6MM PT 90GR|(MT) METRO|ACABADO|100|19,77|1.977,00|0,08%|C|Baixa|23/01/2025",
      "DIMS0023|PEDESTAL PARA ISOLAMENTO DE ÁREA|(UN) UN UNIDADE|ACABADO|100|18,98|1.898,00|0,08%|C|Baixa|22/01/2025",
      "DIMS0252|MÁSCARA DE PROT. RESPIRATÓRIA C/ FILTRO PFF3|(PÇ) PEÇA|DIVERSOS|100|1,05|105,00|0,08%|C|Baixa|22/01/2025",
      "MTMC0801|GLP 20KGS|(PC) PEÇA|ACABADO|96|156,00|14.976,00|0,08%|C|Baixa|27/01/2025",
      "DIME0088|PAPEL SULFITE A4 - PCTE 500 FOLHAS|(UN) UN UNIDADE|DIVERSOS|92|24,05|2.212,80|0,08%|C|Baixa|22/01/2025",
    ];

    // Column letters
    document.getElementById("letters").innerHTML =
      '<th class="h-5 p-0 border-r border-b border-[#9b9b9b] border-r-[#c6c6c6] bg-[#e6e6e6]"><svg class="w-[12px] h-[12px] ml-[11px] mt-1" viewBox="0 0 12 12"><path d="M12 0v12H0z" fill="#b5b5b5" /></svg></th>' +
      "ABCDEFGHIJKLMNOPQRST".split("").map((l) =>
        `<th class="h-5 p-0 leading-[17px] align-bottom font-normal border-r border-b border-b-[#9b9b9b] border-r-[#c6c6c6] ${l === "A" ? "bg-[#d2d2d2] text-[#217346]" : "bg-[#e6e6e6] text-[#222]"}">${l}</th>`).join("") +
      '<th class="h-5 p-0 bg-[#e6e6e6] border-b border-[#9b9b9b]"></th>';

    const num = (n) => `<th class="p-0 h-5 leading-[17px] font-normal align-bottom border-r border-b border-r-[#9b9b9b] border-b-[#bdbdbd] ${n === 1 ? "bg-[#d2d2d2] text-[#217346]" : "bg-[#e6e6e6] text-[#222]"}">${n}</th>`;
    const head = (t) => `<td class="p-0 bg-[#2e75b6] text-white text-center text-xs leading-5 font-bold">${t}</td>`;

    let html = `<tr>${num(1)}<td colspan="12" class="relative p-0 pl-[2px] h-5 align-bottom text-[11px] leading-[18px] font-bold"></td><td colspan="9" class="p-0"></td></tr>`;
    html = `<tr>${num(1)}<td colspan="11" class="relative p-0 pl-[2px] h-5 align-bottom text-[11px] leading-[18px] font-bold">
        <div class="flex h-[18px]">Empresa:<div id="cellMask" class="flex ml-[2px] mt-1"></div></div>
        <div class="absolute -left-px -top-[2px] w-[64px] h-[23px] border-2 border-[#217346]"><span class="absolute -right-[3px] -bottom-[3px] w-[5px] h-[5px] bg-[#217346] outline outline-white"></span></div>
      </td><td colspan="10" class="p-0 pl-[2px] align-bottom text-xs leading-[18px] font-bold">Data: 23/06/2025</td></tr>`;
    html += `<tr>${num(2)}<td colspan="11"></td><td colspan="10" class="p-0 pl-[2px] h-5 align-bottom text-xs leading-[18px] font-bold">Hora: 14:41:08</td></tr>`;
    html += `<tr>${num(3)}<td colspan="21" class="h-7 p-0 pl-[3px] align-bottom font-['Lato',sans-serif] text-[19px] leading-6 font-bold text-[#808080]">Relatório - Curva ABC por Quantidade</td></tr>`;
    [[4, "Unidade Operacional: 1"], [5, "Relatório referente a janeiro de 2025"], [6, "Tipos de Produtos: ACABADO; COMBUSTIVEIS; EQUIPAMENTOS; FERRAMENTAS; GENÉRICO; DIVERSOS; SERVIÇOS; TERCEIROS."], [7, ""]].forEach(([n, t]) => {
      html += `<tr>${num(n)}<td colspan="21" class="h-5 p-0 pl-[2px] align-bottom text-[11px] leading-[18px] font-bold">${t}</td></tr>`;
    });
    html += `<tr>${num(8)}` +
      ["Rank", "Código do<br>Produto", "Descrição", "Und. Medida<br>Estoque", "Tipo de<br>Produto", "Quantidad<br>e", "Valor Unitário<br>(R$) *", "Valor Total (R$)", "%", "Classe", "Prioridad<br>e", "Data<br>Última<br>Entrada NF"].map(head).join("") +
      '<td colspan="3" class="p-0 h-[60px]"></td><td colspan="3" class="p-0 bg-[#2e75b6] text-white text-center text-xs font-bold border border-b-0 border-black">LEGENDA</td><td colspan="3"></td></tr>';

    // Legend cells that share rows 9 to 12 with the product list
    const legenda = {
      9: '<td class="p-0 text-center text-xs leading-5 font-bold text-white bg-[#2e75b6] border-l border-black">%</td><td class="p-0 text-center text-xs leading-5 font-bold text-white bg-[#2e75b6]">Classe</td><td class="p-0 text-center text-xs leading-5 font-bold text-white bg-[#2e75b6] border-r border-black">Prioridade</td>',
      10: '<td class="p-0 pl-[2px] border-l border-black">Acima de 70%</td><td class="p-0 text-center">A</td><td class="p-0 text-center border-r border-black">Alta</td>',
      11: '<td class="p-0 pl-[2px] border-l border-black">Entre 20% e 70%</td><td class="p-0 text-center">B</td><td class="p-0 text-center border-r border-black">Média</td>',
      12: '<td class="p-0 pl-[2px] leading-[19px] border-l border-b border-black">Abaixo de 20%</td><td class="p-0 leading-[19px] text-center border-b border-black">C</td><td class="p-0 leading-[19px] text-center border-r border-b border-black">Baixa</td>',
      14: '<td colspan="3" class="p-0 pl-[3px] text-xs leading-5 font-bold">* Valor Unitário Médio no período</td>',
    };

    produtos.forEach((p, i) => {
      const [cod, desc, und, tipo, qtd, unit, total, pct, classe, prio, data] = p.split("|");
      const n = i + 9;
      html += `<tr>${num(n)}
        <td class="p-0 pl-[2px]">${i + 1}.</td><td class="p-0 pl-[2px]">${cod}</td><td class="p-0 pl-[2px]">${desc}</td>
        <td class="p-0 pl-[2px] overflow-hidden">${und}</td><td class="p-0 pl-[2px]">${tipo}</td><td class="p-0 pr-[2px] text-right">${qtd}</td>
        <td class="p-0 pl-[7px] pr-2"><div class="flex justify-between"><span>R$</span><span>${unit}</span></div></td>
        <td class="p-0 pl-[7px] pr-2"><div class="flex justify-between"><span>R$</span><span>${total}</span></div></td>
        <td class="p-0 pr-[3px] text-right">${pct}</td><td class="p-0 text-center">${classe}</td><td class="p-0 pl-[2px]">${prio}</td><td class="p-0 pr-[3px] text-right">${data}</td>
        <td colspan="3"></td>${legenda[n] || '<td colspan="3"></td>'}<td colspan="3"></td></tr>`;
    });
    html += `<tr>${num("")}<td colspan="21"></td></tr>`;
    document.getElementById("rows").innerHTML = html;

    // Mosaic over the company name
    const tons = ["#bdc3c9", "#cfcfc6", "#bfc4c6", "#d4d2cf", "#dadbdd", "#c6c6c4", "#c8c8c8", "#cbcbcb", "#cccccc", "#d1d2cf", "#c9c9c3", "#c8c8c8", "#dcdde0", "#d3d6d3", "#cfcfd3", "#c6c6c6", "#cbcdca", "#d8dddd", "#e7e3dc", "#cbcbd0", "#c0c0c0"];
    document.getElementById("formulaMask").innerHTML = tons.map((c) => `<span class="w-[11px]"><i class="block h-[10px]" style="background:${c}"></i><i class="block h-1 opacity-40" style="background:${c}"></i></span>`).join("");
    const escuros = ["#c3cabf", "#999b90", "#a6a6a2", "#a9aeb8", "#c3c3c3", "#adadb0", "#a6a8ac", "#b0adab", "#bdb8b0", "#a2a5ae", "#a9abb0", "#d0d0d3", "#a8a5a4", "#c9c9cb", "#a6a9ab", "#b9b9b8", "#b0b2b3", "#dedede", "#b5b5b3", "#a9a9a9", "#a9a9a9"];
    document.getElementById("cellMask").innerHTML = escuros.map((c) => `<span class="w-[10px]"><i class="block h-[9px]" style="background:${c}"></i><i class="block w-[7px] border-b border-dashed border-[#333]"></i></span>`).join("");
  </script>
</body>
</html>
